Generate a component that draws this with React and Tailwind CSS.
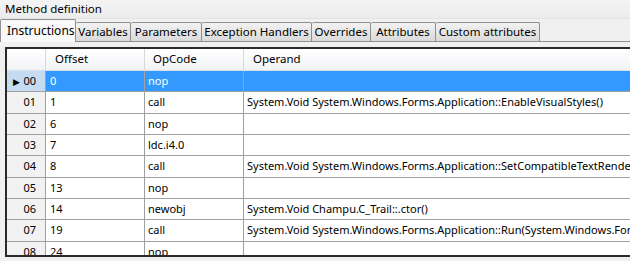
const tabs = [
  { label: 'Instructions', w: 76, active: true },
  { label: 'Variables', w: 55 },
  { label: 'Parameters', w: 71 },
  { label: 'Exception Handlers', w: 110 },
  { label: 'Overrides', w: 59 },
  { label: 'Attributes', w: 65 },
  { label: 'Custom attributes', w: 104 },
]

const rows = [
  ['00', '0', 'nop', ''],
  ['01', '1', 'call', 'System.Void System.Windows.Forms.Application::EnableVisualStyles()'],
  ['02', '6', 'nop', ''],
  ['03', '7', 'ldc.i4.0', ''],
  ['04', '8', 'call', 'System.Void System.Windows.Forms.Application::SetCompatibleTextRenderingDefault(System.Boolean)'],
  ['05', '13', 'nop', ''],
  ['06', '14', 'newobj', 'System.Void Champu.C_Trail::.ctor()'],
  ['07', '19', 'call', 'System.Void System.Windows.Forms.Application::Run(System.Windows.Forms.Form)'],
  ['08', '24', 'nop', ''],
]

function Tab({ label, w, active }) {
  if (active) {
    return (
      <div
        style={{ width: w }}
        className="h-[23px] shrink-0 bg-[#f9f9f9] border border-b-0 border-[#8e8f8f] rounded-t-[2px] pl-[6px] pt-[2px] text-[12px] leading-[18px] relative z-10 -mb-px"
      >
        {label}
      </div>
    )
  }
  return (
    <div
      style={{ width: w }}
      className="h-[19px] shrink-0 bg-gradient-to-b from-[#f2f2f2] to-[#dadada] border border-b-0 border-l-0 border-[#8e8f8f] rounded-t-[2px] text-center text-[11.5px] leading-[18px]"
    >
      {label}
    </div>
  )
}

export default function App() {
  return (
    <div className="w-[630px] h-[261px] overflow-hidden bg-[#f0f0f0] font-['Noto_Sans','Open_Sans',sans-serif] text-black">
      <div className="h-[19px] pl-[5px] text-[11.5px] leading-[17px] bg-gradient-to-b from-[#f4f4f4] to-[#ececec] border-b border-[#e2e2e2]">
        Method definition
      </div>

      <div className="flex items-end h-[23px] border-b border-[#8e8f8f]">
        {tabs.map(t => <Tab key={t.label} {...t} />)}
      </div>

      <div className="pt-[5px] pl-[5px]">
        <div className="h-[210px] overflow-hidden border-l-2 border-t-2 border-b-2 border-[#2a2a2a] bg-white text-[11px]">
          <div className="flex h-[22px] leading-[20px] text-[11.5px] bg-gradient-to-b from-white to-[#f1f3f6] border-b border-[#d5dfe9]">
            <div className="w-[39px] shrink-0 border-r border-[#d8d8d8]" />
            <div className="w-[99px] shrink-0 pl-[9px] border-r border-[#d8d8d8]">Offset</div>
            <div className="w-[99px] shrink-0 pl-[8px] border-r border-[#d8d8d8]">OpCode</div>
            <div className="flex-1 pl-[9px]">Operand</div>
          </div>

          {rows.map(([n, off, op, arg], i) => {
            const sel = i === 0
            return (
              <div key={n} className="flex h-[21.33px] leading-[20px] border-b border-[#a0a0a0] whitespace-nowrap">
                <div
                  className={`w-[39px] shrink-0 flex items-center justify-end pr-[9px] border-r border-[#a0a0a0] relative ${
                    sel ? 'bg-[#c4dbf1] border-[#9dbbd9]' : 'bg-[#f2f2f2]'
                  }`}
                >
                  {sel && <span className="absolute left-[6px] top-[1px] text-[9px]">▶</span>}
                  {n}
                </div>
                <div className={`w-[99px] shrink-0 pl-[4px] border-r border-[#a0a0a0] ${sel ? 'bg-[#3399ff] text-white' : ''}`}>
                  {off}
                </div>
                <div className={`w-[99px] shrink-0 pl-[3px] border-r border-[#a0a0a0] ${sel ? 'bg-[#3399ff] text-white' : ''}`}>
                  {op}
                </div>
                <div className={`flex-1 min-w-0 pl-[3px] overflow-hidden ${sel ? 'bg-[#3399ff] text-white' : ''}`}>{arg}</div>
              </div>
            )
          })}
        </div>
      </div>
    </div>
  )
}
